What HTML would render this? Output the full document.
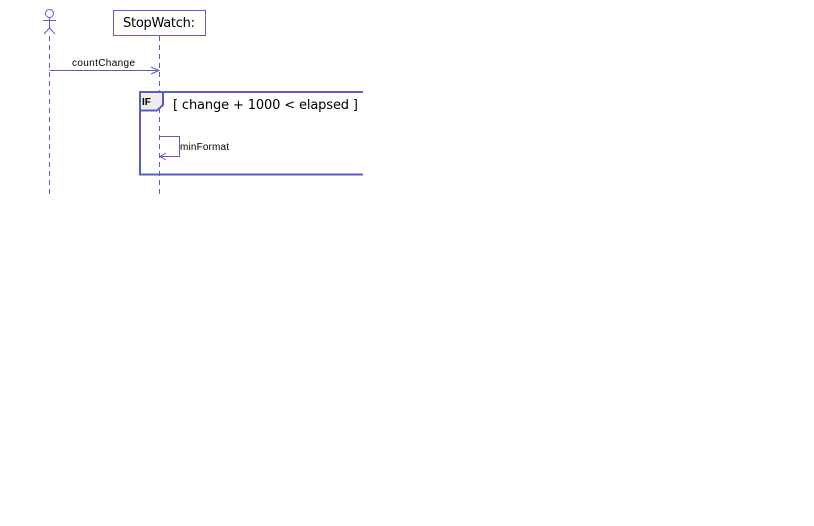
<!DOCTYPE html>
<html><head><style>body{margin:0;background:#fff}svg{display:block}</style></head><body>
<svg width="814" height="526" xmlns="http://www.w3.org/2000/svg">
<g stroke="#5b5bc8" fill="none" stroke-width="1">
<circle cx="49.5" cy="13.5" r="4"/>
<line x1="49.5" y1="17.5" x2="49.5" y2="28"/>
<line x1="43" y1="20.5" x2="56" y2="20.5"/>
<line x1="49.5" y1="28" x2="44" y2="34"/>
<line x1="49.5" y1="28" x2="55" y2="34"/>
<line x1="49.5" y1="36" x2="49.5" y2="196" stroke-dasharray="5,4"/>
<rect x="113.5" y="10.5" width="92" height="25"/>
<line x1="159.5" y1="36" x2="159.5" y2="196" stroke-dasharray="5,4"/>
<line x1="49.5" y1="70.5" x2="159" y2="70.5"/>
<polyline points="151,67 159,70.5 151,74"/>
<rect x="140" y="92" width="230" height="82.5" stroke-width="2"/>
<path d="M140 92 H163 V105 L157 110.5 H140 Z" fill="#eeeeee" stroke-width="2"/>
<polyline points="159.5,136.5 179.5,136.5 179.5,156.5 160,156.5"/>
<polyline points="166,153 160,156.5 166,160"/>
</g>
<rect x="363" y="85" width="20" height="100" fill="#fff"/>
<g font-family="'DejaVu Sans','Liberation Sans',sans-serif" fill="#000">
<text x="123" y="27" font-size="13" textLength="72">StopWatch:</text>
<text x="72" y="66" font-size="10" font-family="'Liberation Sans',sans-serif" textLength="63">countChange</text>
<text x="142" y="105" font-size="10" font-weight="bold" font-family="'Liberation Sans',sans-serif">IF</text>
<text x="173" y="109" font-size="13" textLength="185">[ change + 1000 &lt; elapsed ]</text>
<text x="180" y="150" font-size="10" font-family="'Liberation Sans',sans-serif" textLength="49">minFormat</text>
</g>
</svg>
</body></html>
